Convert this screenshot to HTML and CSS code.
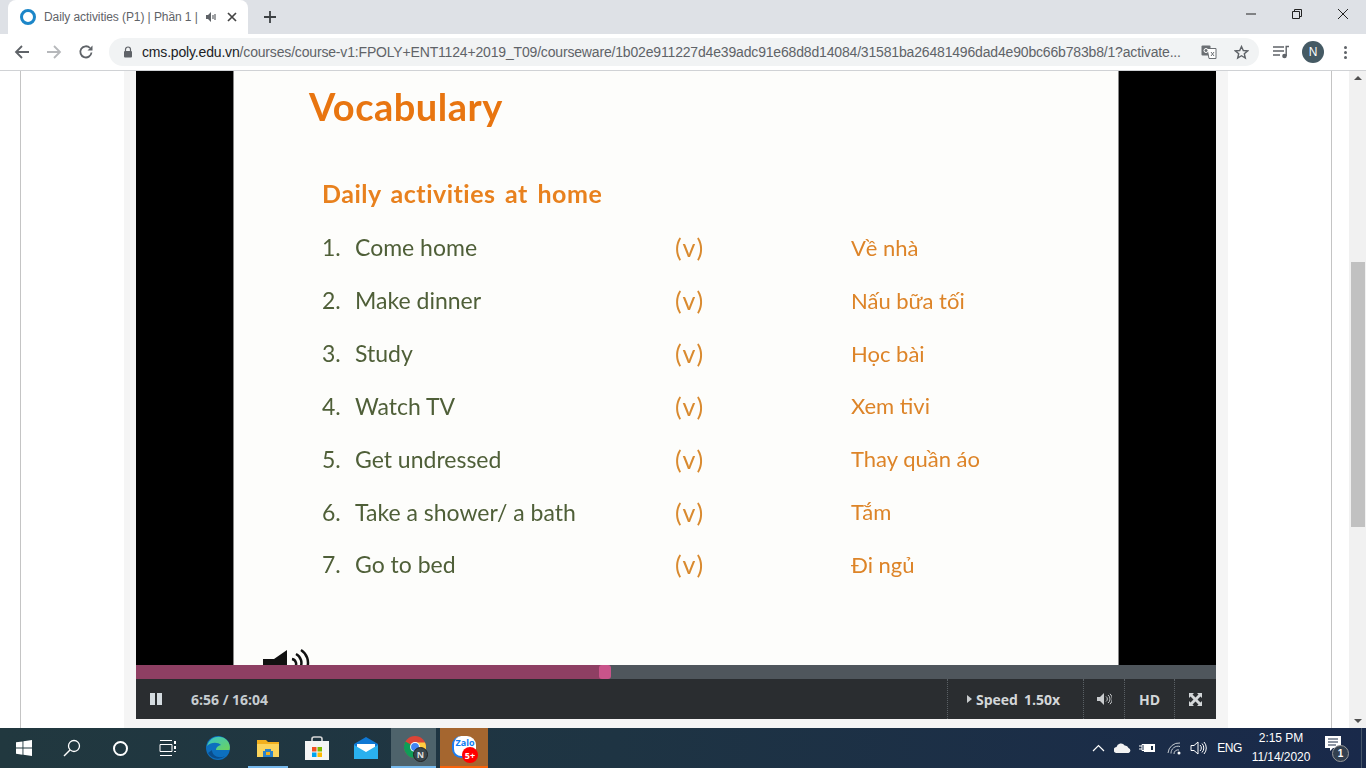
FILE: index.html
```html
<!DOCTYPE html>
<html lang="en">
<head>
<meta charset="utf-8">
<title>Daily activities (P1)</title>
<link rel="stylesheet" href="styles.css">
</head>
<body>
<header class="chrome">
  <div class="tabstrip">
    <div class="tab">
      <span class="tab-favicon"></span>
      <span class="tab-title">Daily activities (P1) | Phần 1 |</span>
      <svg class="tab-audio" width="14" height="14" viewBox="0 0 14 14"><path d="M1 5h2l3-3v10L3 9H1z" fill="#5f6368"/><path d="M8 5v4M10 4v6" stroke="#5f6368" stroke-width="1.2"/></svg>
      <svg class="tab-close" width="10" height="10" viewBox="0 0 10 10"><path d="M1 1l8 8M9 1l-8 8" stroke="#444" stroke-width="1.7"/></svg>
    </div>
    <svg class="newtab" width="14" height="14" viewBox="0 0 14 14"><path d="M7 1v12M1 7h12" stroke="#3c4043" stroke-width="1.8"/></svg>
    <div class="winctl">
      <svg width="12" height="12" viewBox="0 0 12 12"><path d="M1 6h10" stroke="#222" stroke-width="1"/></svg>
      <svg width="12" height="12" viewBox="0 0 12 12"><path d="M1.5 3.5h7v7h-7zM3.5 3.5v-2h7v7h-2" stroke="#222" fill="none"/></svg>
      <svg width="12" height="12" viewBox="0 0 12 12"><path d="M1 1l10 10M11 1L1 11" stroke="#222" stroke-width="1"/></svg>
    </div>
  </div>
  <div class="toolbar">
    <svg class="nav nav-back" width="16" height="16" viewBox="0 0 16 16"><path d="M15 8H2M8 2L2 8l6 6" stroke="#5f6368" stroke-width="1.8" fill="none"/></svg>
    <svg class="nav nav-fwd" width="16" height="16" viewBox="0 0 16 16"><path d="M1 8h13M8 2l6 6-6 6" stroke="#b6b8bb" stroke-width="1.8" fill="none"/></svg>
    <svg class="nav nav-reload" width="16" height="16" viewBox="0 0 16 16"><path d="M13.5 8.5A5.6 5.6 0 1 1 12 4" stroke="#5f6368" stroke-width="1.8" fill="none"/><path d="M14.5 1.5v5h-5z" fill="#5f6368"/></svg>
    <div class="omnibox">
      <svg class="lock" width="10" height="12" viewBox="0 0 10 12"><path d="M2.500 5V3.500a2.500 2.500 0 0 1 5 0V5" stroke="#5f6368" stroke-width="1.2" fill="none"/><rect x="1" y="5" width="8" height="6.500" rx="1" fill="#5f6368"/></svg>
      <span class="url"><span class="url-host">cms.poly.edu.vn</span>/courses/course-v1:FPOLY+ENT1124+2019_T09/courseware/1b02e911227d4e39adc91e68d8d14084/31581ba26481496dad4e90bc66b783b8/1?activate...</span>
      <svg class="translate" width="16" height="14" viewBox="0 0 16 14"><rect x="0.500" y="0.500" width="9" height="10" rx="1" fill="#6b6f73"/><path d="M6 3.500h9v10H8z" fill="#fff" stroke="#6b6f73"/><circle cx="5" cy="5.500" r="2" fill="none" stroke="#fff"/><path d="M10 7l3 4M13 7l-3 4" stroke="#6b6f73"/></svg>
      <svg class="star" width="15" height="15" viewBox="0 0 15 15"><path d="M7.500 1.500l1.800 4 4.300.4-3.300 2.800 1 4.300-3.800-2.300-3.800 2.300 1-4.300L1.400 5.900l4.300-.4z" fill="none" stroke="#5f6368" stroke-width="1.400"/></svg>
    </div>
    <svg class="media" width="16" height="14" viewBox="0 0 16 14"><path d="M0 2h11M0 6h11M0 10h7" stroke="#5f6368" stroke-width="1.400"/><circle cx="11.500" cy="11" r="2.300" fill="#5f6368"/><path d="M13.200 11V1.500H16" stroke="#5f6368" stroke-width="1.400" fill="none"/></svg>
    <span class="avatar">N</span>
    <span class="kebab"><i></i><i></i><i></i></span>
  </div>
</header>

<main class="viewport">
  <div class="page">
    <div class="gutter gutter-left"></div>
    <section class="panel">
      <div class="player">
        <div class="stage">
          <div class="slide">
            <h1 class="slide-title">Vocabulary</h1>
            <h2 class="slide-sub">Daily activities at home</h2>
            <div class="vocab">
              <span class="num">1.</span><span class="word">Come home</span><span class="pos">(v)</span><span class="mean">Về nhà</span>
              <span class="num">2.</span><span class="word">Make dinner</span><span class="pos">(v)</span><span class="mean">Nấu bữa tối</span>
              <span class="num">3.</span><span class="word">Study</span><span class="pos">(v)</span><span class="mean">Học bài</span>
              <span class="num">4.</span><span class="word">Watch TV</span><span class="pos">(v)</span><span class="mean">Xem tivi</span>
              <span class="num">5.</span><span class="word">Get undressed</span><span class="pos">(v)</span><span class="mean">Thay quần áo</span>
              <span class="num">6.</span><span class="word">Take a shower/ a bath</span><span class="pos">(v)</span><span class="mean">Tắm</span>
              <span class="num">7.</span><span class="word">Go to bed</span><span class="pos">(v)</span><span class="mean">Đi ngủ</span>
            </div>
            <svg class="speaker" width="50" height="20" viewBox="0 0 50 20"><path d="M1 11h11L25 2v18H1z" fill="#111"/><path d="M30 11a5 5 0 0 1 2 9M34 6a10 10 0 0 1 4 14M39 2a15 15 0 0 1 6 18" stroke="#111" stroke-width="2.500" fill="none"/></svg>
          </div>
        </div>
        <div class="progress"><div class="progress-fill"></div><span class="progress-handle"></span></div>
        <div class="controls">
          <span class="pause"><i></i><i></i></span>
          <span class="time">6:56 / 16:04</span>
          <span class="ctl ctl-speed"><span class="caret"></span>Speed <b class="rate">1.50x</b></span>
          <span class="ctl ctl-vol"><svg width="15" height="12" viewBox="0 0 15 12"><path d="M0 4h3l4-4v12L3 8H0z" fill="#c9ccce"/><path d="M9 3.500a3 3 0 0 1 0 5M11 2a5 5 0 0 1 0 8M13 .8a7 7 0 0 1 0 10.400" stroke="#c9ccce" fill="none"/></svg></span>
          <span class="ctl ctl-hd">HD</span>
          <span class="ctl ctl-full"><svg width="13" height="13" viewBox="0 0 13 13"><path d="M0 0h5L3.500 1.500 6.500 4.500 9.500 1.500 8 0h5v5l-1.500-1.500-3 3 3 3L13 8v5H8l1.500-1.500-3-3-3 3L5 13H0V8l1.500 1.500 3-3-3-3L0 5z" fill="#d4d7d9"/></svg></span>
        </div>
      </div>
    </section>
    <div class="gutter gutter-right"></div>
    <div class="gutter gutter-end"></div>
  </div>
  <div class="scrollbar">
    <span class="sb-arrow sb-up"></span>
    <div class="sb-track"><div class="sb-thumb"></div></div>
    <span class="sb-arrow sb-down"></span>
  </div>
</main>

<footer class="taskbar">
  <div class="tb-start"><svg width="16" height="16" viewBox="0 0 16 16"><path d="M0 2.300l6.500-.9v6.200H0zM7.400 1.300L16 0v7.600H7.400zM0 8.500h6.500v6.200L0 13.800zM7.400 8.500H16V16l-8.600-1.200z" fill="#fff"/></svg></div>
  <div class="tb-item tb-search"><svg width="18" height="18" viewBox="0 0 18 18"><circle cx="11" cy="7" r="5.500" fill="none" stroke="#fff" stroke-width="1.300"/><path d="M7 11l-6 6" stroke="#fff" stroke-width="1.500"/></svg></div>
  <div class="tb-item tb-cortana"><span class="cortana"></span></div>
  <div class="tb-item tb-tasks"><svg width="18" height="16" viewBox="0 0 18 16"><path d="M1 .500h12M1 15.500h12M1 4.500h12v7H1z" stroke="#fff" fill="none"/><path d="M16 1v3M16 6v3M16 11v1" stroke="#fff" stroke-width="2"/></svg></div>
  <div class="tb-item tb-edge"><svg width="24" height="24" viewBox="0 0 24 24"><defs><linearGradient id="edgeA" x1="0" y1="0" x2="1" y2="1"><stop offset="0" stop-color="#36c3ce"/><stop offset="1" stop-color="#6dd45a"/></linearGradient></defs><circle cx="12" cy="12" r="12" fill="#0d6fbe"/><path d="M1 10C3 2 11-1 17 1.500 22 3.500 25 9 23.500 14H10c0-3 3-4.500 5-5-3-3-10-3-14 1z" fill="url(#edgeA)"/><path d="M6 14c0 6 7 9 13 6-5 4-13 4-17-3z" fill="#0a4d8c"/></svg></div>
  <div class="tb-item tb-files tb-open"><svg width="22" height="18" viewBox="0 0 22 18"><path d="M0 1h9l2 2h11v15H0z" fill="#f2b01e"/><path d="M0 5h22v13H0z" fill="#fbd45c"/><path d="M8 10h6v2h2v6H6v-6h2z" fill="#2b82c9"/><rect x="9" y="13" width="4" height="3" fill="#f2b01e"/></svg></div>
  <div class="tb-item tb-store"><svg width="24" height="24" viewBox="0 0 24 24"><path d="M7 5V3a2 2 0 0 1 2-2h6a2 2 0 0 1 2 2v2" stroke="#d8d8d8" stroke-width="1.600" fill="none"/><path d="M0 5h24v19H0z" fill="#f5f5f5"/><rect x="7" y="11" width="4.500" height="4.500" fill="#f25022"/><rect x="12.500" y="11" width="4.500" height="4.500" fill="#7fba00"/><rect x="7" y="16.500" width="4.500" height="4.500" fill="#00a4ef"/><rect x="12.500" y="16.500" width="4.500" height="4.500" fill="#ffb900"/></svg></div>
  <div class="tb-item tb-mail"><svg width="24" height="22" viewBox="0 0 24 22"><path d="M0 7L12 0l12 7v15H0z" fill="#0f78d4"/><path d="M3 7h18v7l-9 4-9-4z" fill="#fff"/><path d="M0 8l12 7 12-7v14H0z" fill="#2ab0ee"/></svg></div>
  <div class="tb-item tb-chrome tb-active">
    <svg width="22" height="22" viewBox="0 0 24 24"><circle cx="12" cy="12" r="12" fill="#db4437"/><path d="M12 12L1.600 6A12 12 0 0 0 12 24z" fill="#0f9d58"/><path d="M12 7h10.900A12 12 0 0 1 12 24l5-9z" fill="#ffcd40"/><circle cx="12" cy="12" r="5.400" fill="#fff"/><circle cx="12" cy="12" r="4.300" fill="#4285f4"/></svg>
    <span class="chrome-badge">N</span>
  </div>
  <div class="tb-item tb-zalo tb-alert">
    <span class="zalo"><span class="zalo-bubble">Zalo</span></span>
    <span class="zalo-badge">5+</span>
  </div>
  <div class="tray">
    <svg class="tray-up" width="13" height="8" viewBox="0 0 13 8"><path d="M1 7l5.500-5.500L12 7" stroke="#fff" stroke-width="1.200" fill="none"/></svg>
    <svg class="tray-cloud" width="17" height="10" viewBox="0 0 17 10"><path d="M3 10a3 3 0 0 1-.5-6 4.500 4.500 0 0 1 8.200-1.500A3.800 3.800 0 0 1 14.500 5 2.600 2.600 0 0 1 14.500 10z" fill="#f2f2f2"/></svg>
    <svg class="tray-power" width="17" height="10" viewBox="0 0 17 10"><path d="M0 3h3M0 6h3M3 1.500h2v6H3z" stroke="#fff" fill="none"/><rect x="5" y="1" width="11" height="8" fill="#fff"/><rect x="7" y="3" width="7" height="4" fill="#14283f"/><rect x="7" y="3" width="5" height="4" fill="#fff"/></svg>
    <svg class="tray-wifi" width="15" height="13" viewBox="0 0 15 13"><path d="M1 11A11 11 0 0 1 13 1M4 11.500A7 7 0 0 1 13 4.500M7 12a4 4 0 0 1 5-4" stroke="#c5cbd1" fill="none"/><circle cx="12" cy="11" r="1.500" fill="#fff"/></svg>
    <svg class="tray-vol" width="17" height="14" viewBox="0 0 17 14"><path d="M1 4.500h3L8 1v12L4 9.500H1z" stroke="#fff" fill="none"/><path d="M10 4a4 4 0 0 1 0 6M12 2.500a6.500 6.500 0 0 1 0 9M14 1a9 9 0 0 1 0 12" stroke="#fff" fill="none"/></svg>
    <span class="tray-lang">ENG</span>
    <span class="tray-clock"><span>2:15 PM</span><span>11/14/2020</span></span>
    <span class="tray-notify">
      <svg width="16" height="16" viewBox="0 0 16 16"><path d="M0 0h16v12H8l-3 3v-3H0z" fill="#fff"/><path d="M3 3h10M3 6h10M3 9h8" stroke="#1a2a44"/></svg>
      <span class="notify-count">1</span>
    </span>
    <span class="tray-desk"></span>
  </div>
</footer>
</body>
</html>
```

FILE: styles.css
```css
* { box-sizing: border-box; }
html, body { margin: 0; padding: 0; height: 768px; overflow: hidden; }
body { display: flex; flex-direction: column; width: 1366px; font-family: "Open Sans", "Noto Sans", sans-serif; background: #fff; }

.chrome { flex: none; height: 71px; display: flex; flex-direction: column; border-bottom: 1px solid #d0d2d5; }
.tabstrip { height: 34px; background: #dee1e6; display: flex; align-items: center; position: relative; }
.tab { width: 240px; height: 34px; margin-left: 8px; background: #fff; border-radius: 8px 8px 0 0; display: flex; align-items: center; padding-left: 12px; }
.tab-favicon { width: 16px; height: 16px; border: 3px solid #1c86c8; border-radius: 50%; flex: none; }
.tab-title { width: 156px; margin-left: 8px; font-size: 12px; color: #5f6368; white-space: nowrap; font-family: "Liberation Sans", sans-serif; letter-spacing: -0.08px; flex: none; }
.tab-audio { margin-left: 5px; flex: none; }
.tab-close { margin-left: 8px; flex: none; }
.newtab { margin-left: 15px; }
.winctl { margin-left: auto; display: flex; gap: 34px; padding-right: 17px; padding-bottom: 6px; }

.toolbar { height: 36px; background: #fff; display: flex; align-items: center; padding-left: 14px; }
.nav { flex: none; margin-right: 16px; }
.nav-reload { margin-right: 15px; }
.omnibox { width: 1150px; height: 28px; background: #f1f3f4; border-radius: 14px; display: flex; align-items: center; padding-left: 14px; flex: none; }
.lock { flex: none; }
.url { width: 1045px; margin-left: 9px; font-size: 14px; color: #5f6368; white-space: nowrap; overflow: hidden; font-family: "Liberation Sans", sans-serif; letter-spacing: -0.17px; flex: none; }
.url-host { color: #202124; }
.translate { margin-left: 14px; flex: none; }
.star { margin-left: 17px; flex: none; }
.media { margin-left: 14px; flex: none; }
.avatar { margin-left: 13px; width: 22px; height: 22px; border-radius: 50%; background: #455a64; color: #fff; font-size: 12px; display: flex; align-items: center; justify-content: center; flex: none; font-family: "Liberation Sans", sans-serif; }
.kebab { margin-left: 20px; display: flex; flex-direction: column; gap: 2px; }
.kebab i { width: 3px; height: 3px; background: #5f6368; border-radius: 50%; display: block; }

.viewport { flex: none; height: 657px; display: flex; overflow: hidden; }
.page { flex: 1; display: flex; min-width: 0; }
.gutter { background: #fff; flex: none; }
.gutter-left { width: 124px; background: linear-gradient(to right, #fff 20px, #c4c4c4 20px, #c4c4c4 21px, #fff 21px); }
.panel { width: 1104px; flex: none; background: #f5f5f5; padding: 0 12px; }
.gutter-right { width: 104px; border-right: 1px solid #c4c4c4; }
.gutter-end { flex: 1; }

.player { width: 1080px; display: flex; flex-direction: column; }
.stage { height: 594px; background: #000; padding: 0 97px; }
.slide { position: relative; height: 594px; overflow: hidden; background: #fdfdfb; padding: 9px 0 0 75px; font-family: "Lato", "Noto Sans", sans-serif; border-left: 1px solid #888; border-right: 1px solid #888; }
.slide-title { margin: 0; font-size: 38px; line-height: 52px; font-weight: 700; color: #e87510; letter-spacing: 0.5px; filter: blur(0.4px); }
.slide-sub { margin: 45px 0 0 13px; font-size: 25px; line-height: 32px; font-weight: 700; color: #e8811e; letter-spacing: 0.5px; word-spacing: 3px; filter: blur(0.3px); }
.vocab { margin: 12px 0 0 13px; display: grid; grid-template-columns: 33px 320px 176px 1fr; grid-auto-rows: 52.85px; align-items: center; font-size: 23px; filter: blur(0.3px); }
.num { color: #4f5f38; }
.word { color: #4f5f38; }
.pos { color: #d98a2f; font-size: 25px; letter-spacing: 1.500px; }
.mean { color: #dd8428; font-size: 22px; }
.speaker { position: absolute; left: 28px; top: 577px; }

.progress { height: 14px; background: #4f565c; position: relative; }
.progress-fill { width: 469px; height: 14px; background: #8e3f63; }
.progress-handle { position: absolute; left: 463px; top: 0; width: 12px; height: 14px; border-radius: 3px; background: #c9548a; }
.controls { height: 40px; background: #2a2d30; display: flex; align-items: center; color: #d4d7d9; font-size: 14px; font-weight: 700; }
.pause { width: 55px; padding-left: 14px; display: flex; gap: 2px; }
.pause i { display: block; width: 5px; height: 12px; background: #d4dbe0; }
.time { color: #c6ccd0; font-size: 14px; }
.ctl { height: 40px; display: flex; align-items: center; justify-content: center; border-left: 1px dotted #5a6065; flex: none; }
.ctl-speed { margin-left: auto; width: 136px; justify-content: flex-start; padding-left: 19px; }
.caret { width: 0; height: 0; border-left: 5px solid #c9ccce; border-top: 4.500px solid transparent; border-bottom: 4.500px solid transparent; margin-right: 4px; }
.rate { font-weight: 700; margin-left: 6px; }
.ctl-vol { width: 41px; }
.ctl-hd { width: 50px; }
.ctl-full { width: 42px; }

.scrollbar { width: 17px; flex: none; background: #f1f1f1; display: flex; flex-direction: column; align-items: center; }
.sb-arrow { flex: none; width: 0; height: 0; border-left: 4px solid transparent; border-right: 4px solid transparent; }
.sb-up { border-bottom: 4px solid #505050; margin: 5px 0 8px; }
.sb-down { border-top: 4px solid #505050; margin: 8px 0 5px; }
.sb-track { flex: 1; width: 17px; padding: 174px 1px 0 2px; }
.sb-thumb { height: 265px; background: #c1c1c1; }

.taskbar { flex: none; height: 40px; display: flex; align-items: center; background: linear-gradient(to right, #21383f, #1e3443 45%, #19294a); color: #fff; }
.tb-start { width: 48px; height: 40px; display: flex; align-items: center; justify-content: center; flex: none; }
.tb-item { width: 48px; height: 40px; display: flex; align-items: center; justify-content: center; position: relative; flex: none; }
.cortana { width: 15px; height: 15px; border: 2.500px solid #fff; border-radius: 50%; display: block; }
.tb-edge { width: 52px; }
.tb-files { width: 40px; margin-left: 4px; }
.tb-store { width: 58px; }
.tb-mail { width: 40px; }
.tb-open { box-shadow: inset 0 -2px 0 #76b9ed; }
.tb-chrome { margin-left: 5px; width: 45px; padding: 0 0 3px 3px; background: #4e636b; box-shadow: inset 0 -2px 0 #76b9ed; }
.tb-zalo { margin-left: 4px; padding-bottom: 3px; background: #a5662f; box-shadow: inset 0 -2px 0 #f7630c; }
.chrome-badge { position: absolute; left: 22px; top: 19px; width: 15px; height: 15px; border-radius: 50%; background: #39474e; border: 1px solid #222; color: #ddd; font-size: 9px; font-weight: 700; display: flex; align-items: center; justify-content: center; }
.zalo { width: 24px; height: 22px; border-radius: 9px; background: #fff; border-left: 2px solid #1a7cf0; border-bottom: 2px solid #1a7cf0; display: flex; align-items: center; justify-content: center; }
.zalo-bubble { color: #0d7cf2; font-size: 9px; font-weight: 700; line-height: 10px; margin-bottom: 5px; }
.zalo-badge { position: absolute; left: 22px; top: 19px; width: 16px; height: 16px; border-radius: 50%; background: #f00; color: #fff; font-size: 9px; font-weight: 700; display: flex; align-items: center; justify-content: center; }

.tray { margin-left: auto; display: flex; align-items: center; height: 40px; font-family: "Liberation Sans", sans-serif; }
.tray-up { margin-right: 9px; }
.tray-cloud { margin-right: 8px; }
.tray-power { margin-right: 11px; }
.tray-wifi { margin-right: 8px; }
.tray-vol { margin-right: 10px; }
.tray-lang { font-size: 12px; margin-right: 10px; letter-spacing: -0.4px; }
.tray-clock { width: 58px; display: flex; flex-direction: column; align-items: center; font-size: 12px; line-height: 19px; margin-right: 15px; letter-spacing: -0.05px; }
.tray-notify { position: relative; width: 29px; height: 24px; display: flex; margin-right: 7px; }
.notify-count { position: absolute; left: 7px; top: 9px; width: 17px; height: 17px; border-radius: 50%; background: #33404f; border: 1px solid #999; font-size: 10px; font-weight: 700; display: flex; align-items: center; justify-content: center; }
.tray-desk { width: 5px; height: 40px; border-left: 1px solid #46566a; }
```
